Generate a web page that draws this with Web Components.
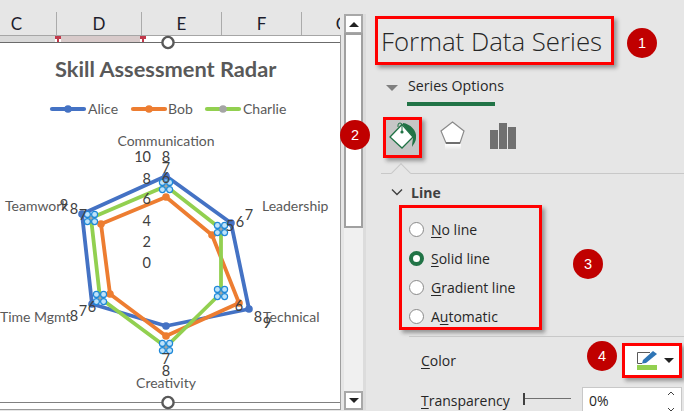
<!DOCTYPE html>
<html>
<head>
<meta charset="utf-8">
<title>Format Data Series</title>
<style>
  html, body { margin: 0; padding: 0; width: 684px; height: 411px; overflow: hidden; background: #e6e6e6; }
  body { display: flex; font-family: "Open Sans", "Noto Sans", sans-serif; color: #262626; }
</style>
</head>
<body>
<sheet-view></sheet-view>
<v-scrollbar></v-scrollbar>
<format-pane></format-pane>

<script>
class ColHeaders extends HTMLElement {
  constructor() {
    super();
    this.attachShadow({ mode: 'open' });
    const cols = [['C', 80], ['D', 85], ['E', 80], ['F', 80], ['G', 80]];
    this.shadowRoot.innerHTML = `
      <style>
        :host { display: block; width: 340px; height: 23px; margin-top: 12px; overflow: hidden; font: 17px Lato, sans-serif; color: #1c1c2c; }
        .row { display: flex; margin-left: -23px; height: 100%; }
        .c { box-sizing: border-box; flex: none; border-right: 1px solid #ababab; display: flex; align-items: center; justify-content: center; }
        .c:last-child { border: 0; }
      </style>
      <div class="row">
        ${cols.map(([n, w]) => `<div class="c" style="width:${w}px"><span>${n}</span></div>`).join('')}
      </div>`;
  }
}
customElements.define('col-headers', ColHeaders);

class RadarChart extends HTMLElement {
  constructor() {
    super();
    this.attachShadow({ mode: 'open' });
    const series = [
      { c: '#4472c4', p: [[166,176],[231,223],[249,309],[166,326],[92,304],[82,214]] },
      { c: '#ed7d31', p: [[166,197],[212,235],[239,303],[166,336],[110,294],[101,224]] },
      { c: '#92d050', p: [[166,186],[221,229],[221,293],[166,347],[100,298],[91,218]], sel: true }
    ];
    const cats = [
      ['Communication', 166, 140, 'middle'], ['Leadership', 262, 205, 'start'], ['Technical', 263, 316, 'start'],
      ['Creativity', 166, 382, 'middle'], ['Time Mgmt', 0, 316, 'start'], ['Teamwork', 5, 205, 'start']
    ];
    const axis = [['10',156],['8',178],['6',198],['4',220],['2',241],['0',262]];
    const vals = [
      ['8',166,156],['7',166,167],['6',166,177],
      ['5',230,225],['6',240,221],['7',249,214],
      ['6',239,305],['8',258,316],['9',267,322],
      ['7',166,358],['8',166,370],
      ['6',92,306],['7',83,310],['8',74,315],
      ['7',83,214],['8',74,208],['9',64,204]
    ];
    const legend = [['Alice',50,'#4472c4','#4472c4',38],['Bob',131,'#ed7d31','#ed7d31',37],['Charlie',205,'#92d050','#a5a5a5',38]];
    const poly = s => `<polygon points="${s.p.map(q => q.join(',')).join(' ')}" fill="none" stroke="${s.c}" stroke-width="3.8" stroke-linejoin="round"/>`;
    const dots = s => s.sel
      ? s.p.map(([x, y]) => `<path d="M${x-2.5} ${y}L${x} ${y-2.5}L${x+2.5} ${y}L${x} ${y+2.5}Z" fill="#a5a5a5"/>` +
          [[-3.6,-3.6],[3.6,-3.6],[-3.6,3.6],[3.6,3.6]].map(([a, b]) => `<circle cx="${x+a}" cy="${y+b}" r="3" fill="#bfe3fa" stroke="#1e88d8" stroke-width="1.2"/>`).join('')).join('')
      : s.p.map(([x, y]) => `<circle cx="${x}" cy="${y}" r="3.8" fill="${s.c}"/>`).join('');
    this.shadowRoot.innerHTML = `
      <style>
        :host { display: block; position: absolute; left: 0; top: 0; width: 340px; height: 411px; pointer-events: none; }
        svg { display: block; }
        text { font-family: Lato, "Open Sans", sans-serif; dominant-baseline: central; }
        .title { font-size: 21.8px; font-weight: 700; fill: #595959; }
        .leg { font-size: 14px; fill: #595959; }
        .cat { font-size: 14px; fill: #595959; }
        .num { font-size: 14.5px; fill: #404040; text-anchor: middle; }
      </style>
      <svg width="340" height="411" viewBox="0 0 340 411">
        <text class="title" x="55" y="68">Skill Assessment Radar</text>
        ${legend.map(([n, x, c, m, t]) => `
          <line x1="${x+2}" x2="${x+34}" y1="109" y2="109" stroke="${c}" stroke-width="4.2" stroke-linecap="round"/>
          <circle cx="${x+18}" cy="109" r="3.8" fill="${m}"/>
          <text class="leg" x="${x+t}" y="108.5">${n}</text>`).join('')}
        ${series.map(poly).join('')}
        ${series.map(dots).join('')}
        ${cats.map(([n, x, y, a]) => `<text class="cat" x="${x}" y="${y}" text-anchor="${a}">${n}</text>`).join('')}
        ${axis.map(([n, y]) => `<text class="num" x="151" y="${y}" style="text-anchor:end">${n}</text>`).join('')}
        ${vals.map(([n, x, y]) => `<text class="num" x="${x}" y="${y}">${n}</text>`).join('')}
        <g fill="#fff" stroke="#595959" stroke-width="2.4">
          <circle cx="168" cy="42.5" r="5.6"/>
          <circle cx="168" cy="402.5" r="5.6"/>
        </g>
      </svg>`;
  }
}
customElements.define('radar-chart', RadarChart);

class SheetView extends HTMLElement {
  constructor() {
    super();
    this.attachShadow({ mode: 'open' });
    this.shadowRoot.innerHTML = `
      <style>
        :host { display: flex; flex-direction: column; position: relative; width: 344px; flex: none; }
        .frame { box-sizing: border-box; width: 341px; height: 375px; background: #fff; border-right: 1px solid #9f9f9f; display: flex; flex-direction: column; }
        .strip { display: flex; height: 6px; flex: none; border-top: 1px solid #a6a6a6; }
        .strip div { height: 100%; }
        .a { width: 57px; background: #d9d9d9; }
        .b { width: 85px; background: #d8caca; }
        .top { height: 1px; background: #6b6b6b; flex: none; }
        .body { flex: 1; background: #fff; }
        .edge { height: 1px; background: #808080; flex: none; }
        .gap { height: 6px; background: #fff; flex: none; }
        .bottom { height: 1px; background: #9a9a9a; flex: none; }
        .tick { position: absolute; top: 36px; width: 6px; height: 6px; background: #fff; border-top: 3px solid #c0394b; box-sizing: border-box; }
        .tick::after { content: ''; display: block; width: 2px; height: 3px; margin-left: 2px; background: #c0394b; }
      </style>
      <col-headers></col-headers>
      <div class="frame">
        <div class="strip"><div class="a"></div><div class="b"></div></div>
        <div class="top"></div>
        <div class="body"></div>
        <div class="edge"></div>
        <div class="gap"></div>
        <div class="bottom"></div>
      </div>
      <div class="tick" style="left:55px"></div>
      <div class="tick" style="left:140px"></div>
      <radar-chart></radar-chart>`;
  }
}
customElements.define('sheet-view', SheetView);

class VScrollbar extends HTMLElement {
  constructor() {
    super();
    this.attachShadow({ mode: 'open' });
    this.shadowRoot.innerHTML = `
      <style>
        :host { display: flex; flex-direction: column; box-sizing: border-box; width: 22px; height: 396px; flex: none; margin-top: 14px; background: #f0f0f0; border-right: 3px solid #dcdcdc; }
        .btn { box-sizing: border-box; height: 19px; background: #fff; border: 2px solid #a8a8a8; display: flex; align-items: center; justify-content: center; flex: none; }
        .up { border-bottom-width: 1px; }
        .btn i { width: 0; height: 0; border-left: 5px solid transparent; border-right: 5px solid transparent; }
        .up i { border-bottom: 5px solid #222; }
        .down i { border-top: 5px solid #222; }
        .thumb { box-sizing: border-box; height: 195px; background: #fff; border: 2px solid #a0a0a0; flex: none; }
        .track { flex: 1; }
      </style>
      <div class="btn up"><i></i></div>
      <div class="thumb"></div>
      <div class="track"></div>
      <div class="btn down"><i></i></div>`;
  }
}
customElements.define('v-scrollbar', VScrollbar);

class RedBox extends HTMLElement {
  constructor() {
    super();
    this.attachShadow({ mode: 'open' });
    this.shadowRoot.innerHTML = `
      <style>
        :host { display: block; box-sizing: border-box; border: 3px solid #ff0000; box-shadow: 3px 3px 4px rgba(0,0,0,.35); }
      </style>
      <slot></slot>`;
  }
}
customElements.define('red-box', RedBox);

class StepBadge extends HTMLElement {
  constructor() {
    super();
    this.attachShadow({ mode: 'open' });
    this.shadowRoot.innerHTML = `
      <style>
        :host { position: absolute; width: 30px; height: 30px; border-radius: 50%; background: #c00000; color: #fff;
          display: flex; align-items: center; justify-content: center; font: 14.5px "Liberation Sans", sans-serif; }
      </style>
      <slot></slot>`;
  }
}
customElements.define('step-badge', StepBadge);

class RadioRow extends HTMLElement {
  constructor() {
    super();
    this.attachShadow({ mode: 'open' });
    this.shadowRoot.innerHTML = `
      <style>
        :host { display: flex; align-items: center; gap: 7px; height: 29px; font-size: 14px; color: #262626; }
        .r { box-sizing: border-box; width: 15px; height: 15px; border-radius: 50%; flex: none; background: #fff; border: 1px solid #8a8a8a; }
        :host([checked]) .r { border: 4px solid #217346; }
      </style>
      <span class="r"></span><span><slot></slot></span>`;
  }
}
customElements.define('radio-row', RadioRow);

class FormatPane extends HTMLElement {
  constructor() {
    super();
    this.attachShadow({ mode: 'open' });
    this.shadowRoot.innerHTML = `
      <style>
        :host { display: block; position: relative; flex: 1; font-family: "Open Sans", "Noto Sans", sans-serif; color: #262626; }
        .head { width: 239px; height: 49px; margin: 16px 0 0 9px; display: flex; align-items: center; padding-left: 3px;
          font-size: 25.8px; font-weight: 300; color: #262626; white-space: nowrap; }
        .tabs { display: flex; align-items: center; margin: 7px 0 0 20px; gap: 10px; height: 27px; font-size: 14.2px; font-weight: 500; }
        .tabs i { width: 0; height: 0; border-left: 6px solid transparent; border-right: 6px solid transparent; border-top: 6px solid #7f7f7f; margin-top: 5px; }
        .green { width: 88px; height: 4px; background: #217346; margin: 3px 0 0 41px; }
        .icons { display: flex; align-items: center; margin: 11px 0 0 17px; height: 41px; }
        .paint { width: 39px; height: 41px; background: #c6c6c6; }
        .paint svg { display: block; }
        .penta { margin: -3px 0 0 18px; }
        .bars { margin: -3px 0 0 24px; }
        .rule { position: relative; height: 1px; background: #c8c8c8; margin: 15px 0 0 15px; }
        .rule::after { content: ''; position: absolute; left: 13px; top: -7px; box-sizing: border-box; width: 14px; height: 14px; background: #e6e6e6;
          border-left: 1px solid #c8c8c8; border-top: 1px solid #c8c8c8; transform: rotate(45deg); }
        .sect { display: flex; align-items: center; gap: 8px; margin: 8px 0 0 25px; height: 20px; font-size: 14px; font-weight: 700; color: #404040; }
        .radios { width: 143px; height: 125px; margin: 3px 0 0 33px; padding: 7px 0 0 7px; }
        .rule2 { height: 1px; background: #c8c8c8; margin: 6px 0 0 43px; }
        .color { display: flex; align-items: center; justify-content: space-between; margin: 6px 2px 0 55px; height: 35px; font-size: 14px; }
        .pick { width: 60px; height: 35px; display: flex; align-items: center; gap: 7px; padding-left: 12px; background: #fff; }
        .pick svg { display: block; }
        .pick i { width: 0; height: 0; border-left: 5px solid transparent; border-right: 5px solid transparent; border-top: 5px solid #222; }
        .trans { display: flex; align-items: center; margin: 9px 0 0 55px; height: 26px; font-size: 14px; }
        .trans .lbl { width: 102px; flex: none; }
        .slider { width: 48px; height: 12px; flex: none; display: flex; align-items: center; margin-top: -3px; }
        .slider::before { content: ''; width: 2px; height: 12px; background: #404040; }
        .slider::after { content: ''; flex: 1; height: 1px; background: #707070; }
        .num { box-sizing: border-box; width: 100px; margin-left: 11px; height: 26px; background: #fff; border: 1px solid #c8c8c8; padding: 0 6px;
          display: flex; align-items: center; justify-content: space-between; font-size: 14px; }
        .spin { width: 9px; height: 24px; display: flex; flex-direction: column; align-items: center; justify-content: space-between; padding: 3px 0 0; box-sizing: border-box; }
        .spin svg { display: block; }
        u { text-underline-offset: 2px; text-decoration-thickness: 1px; }
      </style>
      <red-box class="head">Format Data Series</red-box>
      <div class="tabs"><i></i><span>Series Options</span></div>
      <div class="green"></div>
      <div class="icons">
        <red-box class="paint">
          <svg width="33" height="35" viewBox="0 0 33 35">
            <path d="M17 3 C24 4 31 10 30 18 C30 22 27 25 26 27 C26 23 27 20 27 17 L17 5 Z" fill="#217346"/>
            <path d="M4 17 L16 4.5 L27 17 L16 28 Z" fill="#fff" stroke="#217346" stroke-width="1.3"/>
            <path d="M16 12 V5 a2 2 0 0 0 -4 0 v2" fill="none" stroke="#217346" stroke-width="1"/>
            <circle cx="16" cy="12" r="1.6" fill="#217346"/>
          </svg>
        </red-box>
        <svg class="penta" width="26" height="30" viewBox="0 0 26 30">
          <defs>
            <linearGradient id="fade" x1="0" y1="0" x2="0" y2="1">
              <stop offset="0" stop-color="#fff"/><stop offset="1" stop-color="#fff" stop-opacity="0"/>
            </linearGradient>
          </defs>
          <path d="M12.5 1 L24 10 L20 22 L6 22 L1 10 Z" fill="#fff" stroke="#8a8a8a" stroke-width="1.2"/>
          <path d="M6 22 H20" stroke="#6f6f6f" stroke-width="2"/>
          <rect x="5" y="23" width="16" height="6" fill="url(#fade)"/>
        </svg>
        <svg class="bars" width="26" height="26" viewBox="0 0 26 26">
          <rect x="0" y="7" width="8" height="19" fill="#707070"/>
          <rect x="9" y="0" width="8" height="26" fill="#707070"/>
          <rect x="18" y="4" width="8" height="22" fill="#707070"/>
        </svg>
      </div>
      <div class="rule"></div>
      <div class="sect">
        <svg width="12" height="8" viewBox="0 0 12 8"><path d="M1 1.5 L6 6.5 L11 1.5" fill="none" stroke="#404040" stroke-width="1.4"/></svg>
        <span>Line</span>
      </div>
      <red-box class="radios">
        <radio-row><u>N</u>o line</radio-row>
        <radio-row checked><u>S</u>olid line</radio-row>
        <radio-row><u>G</u>radient line</radio-row>
        <radio-row>A<u>u</u>tomatic</radio-row>
      </red-box>
      <div class="rule2"></div>
      <div class="color">
        <span><u>C</u>olor</span>
        <red-box class="pick">
          <svg width="20" height="19" viewBox="0 0 20 19">
            <path d="M13 1.5 H0.5 V12.5 H5" fill="none" stroke="#595959" stroke-width="1"/>
            <path d="M5 12.5 L6 9 L16 0 L20 3 L9 12 Z" fill="#2e75b6"/>
            <rect x="0" y="14" width="20" height="5" fill="#92d050"/>
          </svg>
          <i></i>
        </red-box>
      </div>
      <div class="trans">
        <span class="lbl"><u>T</u>ransparency</span>
        <span class="slider"></span>
        <div class="num"><span>0%</span>
          <span class="spin">
            <svg width="8" height="5" viewBox="0 0 8 5"><path d="M1 4 L4 1 L7 4" fill="none" stroke="#404040"/></svg>
            <svg width="8" height="5" viewBox="0 0 8 5"><path d="M1 1 L4 4 L7 1" fill="none" stroke="#404040"/></svg>
          </span>
        </div>
      </div>
      <step-badge style="left:261px;top:28px">1</step-badge>
      <step-badge style="left:-26px;top:120px">2</step-badge>
      <step-badge style="left:207px;top:249px">3</step-badge>
      <step-badge style="left:221px;top:341px">4</step-badge>`;
  }
}
customElements.define('format-pane', FormatPane);
</script>
</body>
</html>
